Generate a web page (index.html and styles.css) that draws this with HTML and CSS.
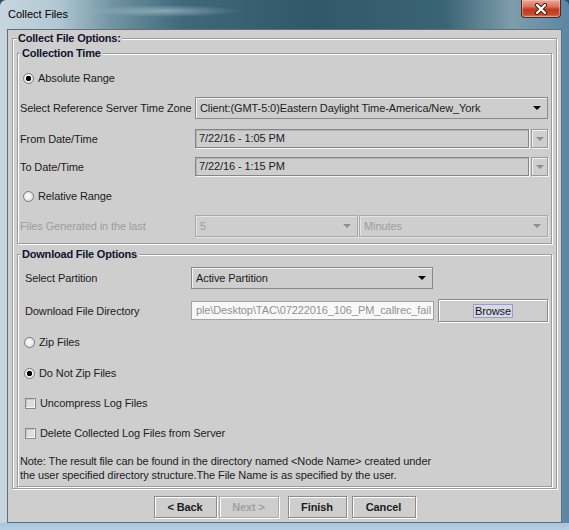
FILE: index.html
```html
<!doctype HTML>
<html>
	<head>
		<meta charset="utf-8"/>
		<title>Collect Files</title>
		<link rel="stylesheet" href="styles.css">
	</head>

	<body>
		<div class='window'>
			<div class='titlebar'>
				<span class='title'>Collect Files</span>
				<div class='close'>
					<svg width='14' height='12' viewBox='0 0 14 12'>
						<path d='M3 2 L11 10 M11 2 L3 10' stroke='#3b1a14' stroke-width='4.2' stroke-linecap='round'/>
						<path d='M3 2 L11 10 M11 2 L3 10' stroke='#fff' stroke-width='2.4' stroke-linecap='round'/>
					</svg>
				</div>
			</div>

			<div class='client'>
				<fieldset class='group outer'>
					<legend>Collect File Options:</legend>

					<fieldset class='group time'>
						<legend>Collection Time</legend>

						<div class='row opt abs-row'><span class='radio on'></span>Absolute Range</div>

						<div class='row tz-row'>
							<span class='lbl'>Select Reference Server Time Zone</span>
							<div class='combo tz'><span class='val'>Client:(GMT-5:0)Eastern Daylight Time-America/New_York</span><span class='arrow'></span></div>
						</div>

						<div class='row date-row from-row'>
							<span class='lbl'>From Date/Time</span>
							<div class='datefield'>7/22/16 - 1:05 PM</div>
							<div class='spin'><span class='arrow grey'></span></div>
						</div>

						<div class='row date-row to-row'>
							<span class='lbl'>To Date/Time</span>
							<div class='datefield'>7/22/16 - 1:15 PM</div>
							<div class='spin'><span class='arrow grey'></span></div>
						</div>

						<div class='row opt rel-row'><span class='radio'></span>Relative Range</div>

						<div class='row last-row'>
							<span class='lbl off'>Files Generated in the last</span>
							<div class='combo off count'><span class='val'>5</span><span class='arrow grey'></span></div>
							<div class='combo off unit'><span class='val'>Minutes</span><span class='arrow grey'></span></div>
						</div>
					</fieldset>

					<fieldset class='group download'>
						<legend>Download File Options</legend>

						<div class='row part-row'>
							<span class='lbl'>Select Partition</span>
							<div class='combo partition'><span class='val'>Active Partition</span><span class='arrow'></span></div>
						</div>

						<div class='row dir-row'>
							<span class='lbl'>Download File Directory</span>
							<div class='dirfield'>ple\Desktop\TAC\07222016_106_PM_callrec_fail</div>
							<div class='browse'><span class='focus'>Browse</span></div>
						</div>

						<div class='row opt dl zip-row'><span class='radio'></span>Zip Files</div>
						<div class='row opt dl nozip-row'><span class='radio on'></span>Do Not Zip Files</div>
						<div class='row opt dl unc-row'><span class='check'></span>Uncompress Log Files</div>
						<div class='row opt dl del-row'><span class='check'></span>Delete Collected Log Files from Server</div>

						<p class='note'>Note: The result file can be found in the directory named &lt;Node Name&gt; created under<br>the user specified directory structure.The File Name is as specified by the user.</p>
					</fieldset>
				</fieldset>

				<div class='buttons'>
					<div class='btn back'>&lt; Back</div>
					<div class='btn next off'>Next &gt;</div>
					<div class='btn finish'>Finish</div>
					<div class='btn cancel'>Cancel</div>
				</div>
			</div>
		</div>
	</body>
</html>
```

FILE: styles.css
```css
html, body {
	margin: 0;
	padding: 0;
	width: 569px;
	height: 530px;
	overflow: hidden;
	background-color: #2f4d5d;
}
body * {
	box-sizing: border-box;
	font-family: "Liberation Sans", Arial, sans-serif;
}

/* window frame + glass title */
.window {
	width: 569px;
	height: 530px;
	padding: 0 7px 7px 7px;
	display: flex;
	flex-direction: column;
	border-radius: 6px 6px 0 0;
	background:
		linear-gradient(#a8c3da, #b7cfe3) left bottom / 100% 7px no-repeat,
		radial-gradient(ellipse 75px 6px at 165px 11px, rgba(190, 212, 222, 0.55), rgba(190, 212, 222, 0) 100%),
		linear-gradient(to right, #c6d6df 0%, #b3c8d4 10%, #6f93a3 20%, #3f6879 32%, #315868 55%, #3a6373 78%, #7d9dab 90%, #5d86a4 100%);
}

.titlebar {
	height: 29px;
	flex-shrink: 0;
	display: flex;
	justify-content: space-between;
	align-items: flex-start;
}
.title {
	padding: 8px 0 0 1px;
	font-size: 11px;
	line-height: 13px;
	color: #000;
}
.close {
	width: 40px;
	height: 18px;
	margin-right: 1px;
	display: flex;
	align-items: center;
	justify-content: center;
	border: 1px solid #54261d;
	border-top: none;
	border-radius: 0 0 4px 4px;
	background: linear-gradient(#e9a999 0%, #d9705a 40%, #c0391f 55%, #c84a2f 85%, #de7c5e 100%);
	box-shadow: inset 0 0 0 1px rgba(255, 210, 195, 0.45);
}

/* dialog body */
.client {
	flex: 1;
	display: flex;
	flex-direction: column;
	padding: 0 4px;
	background-color: #cecece;
	border: 1px solid #5e6f7d;
	font-size: 11px;
	letter-spacing: -0.1px;
	color: #1c1c1c;
}

fieldset.group {
	margin: 0;
	min-width: 0;
	border: 1px solid #9c9c9c;
	box-shadow: 1px 1px 0 #fff, inset 1px 1px 0 #fff;
}
fieldset.group > legend {
	font-weight: bold;
	font-size: 11px;
	line-height: 13px;
	letter-spacing: -0.2px;
	color: #10142c;
	background-color: #cecece;
}

.outer {
	margin-top: 2px !important;
	padding: 0 4px 1px 4px;
}
.outer > legend {
	padding: 0 1px;
}

.time, .download {
	padding: 0 3px 0 2px;
}
.time > legend, .download > legend {
	padding: 0 2px;
}
.time {
	margin-top: 2px !important;
	padding-bottom: 6px;
}
.download {
	margin-top: 4px !important;
	padding-bottom: 4px;
}

.row {
	display: flex;
	align-items: center;
	white-space: nowrap;
}
.opt {
	height: 24px;
	padding-left: 3px;
}
.opt.dl {
	padding-left: 4px;
}

.abs-row { margin-top: 6px; }
.tz-row { margin-top: 7px; height: 22px; }
.date-row { height: 19px; }
.from-row { margin-top: 10px; }
.to-row { margin-top: 9px; }
.rel-row { margin-top: 8px; }
.last-row { margin-top: 7px; height: 22px; }

.part-row { margin-top: 6px; height: 22px; padding-left: 5px; }
.dir-row { margin-top: 10px; height: 23px; padding-left: 5px; }
.zip-row { margin-top: 8px; }
.nozip-row { margin-top: 7px; }
.unc-row { margin-top: 6px; }
.del-row { margin-top: 6px; }

.lbl {
	flex-shrink: 0;
}
.time .lbl { width: 175px; }
.download .lbl { width: 166px; }
.off { color: #9d9d9d; }

/* combo boxes */
.combo {
	display: flex;
	align-items: center;
	height: 22px;
	padding-left: 4px;
	border: 1px solid #8a8a8a;
	box-shadow: inset 1px 1px 0 #f2f2f2;
}
.combo .val {
	flex: 1;
	overflow: hidden;
}
.combo.tz { width: 353px; }
.combo.partition { width: 242px; }
.combo.count { width: 163px; margin-right: 1px; }
.combo.unit { width: 189px; }
.combo.off {
	border-color: #a9a9a9;
	box-shadow: inset 1px 1px 0 #e4e4e4, 1px 1px 0 #e4e4e4;
}

.arrow {
	width: 0;
	height: 0;
	margin-right: 6px;
	border-left: 4px solid transparent;
	border-right: 4px solid transparent;
	border-top: 4px solid #000;
}
.arrow.grey {
	border-top-color: #8e8e8e;
}

/* date spinners */
.datefield {
	width: 334px;
	height: 19px;
	line-height: 17px;
	padding-left: 3px;
	border: 1px solid #858585;
	box-shadow: 1px 1px 0 #f6f6f6, inset 1px 1px 0 #b4b4b4;
}
.spin {
	width: 17px;
	height: 19px;
	margin-left: 2px;
	display: flex;
	align-items: center;
	justify-content: center;
	border: 1px solid #9a9a9a;
	box-shadow: inset 1px 1px 0 #f2f2f2, 1px 1px 0 #f2f2f2;
}
.spin .arrow {
	margin: 0;
}

/* directory field + browse */
.dirfield {
	width: 243px;
	height: 19px;
	line-height: 17px;
	padding-right: 2px;
	text-align: right;
	overflow: hidden;
	border: 1px solid #a3a3a3;
	background-color: #f8f8f8;
	color: #929292;
}
.browse {
	width: 110px;
	height: 23px;
	margin-left: 4px;
	display: flex;
	align-items: center;
	justify-content: center;
	border: 1px solid #8c8c8c;
	box-shadow: inset 1px 1px 0 #fff, 1px 1px 0 #fff;
}
.browse .focus {
	height: 14px;
	line-height: 12px;
	padding: 0 1px;
	border: 1px solid #9c9cc8;
	background-color: #d8d8e6;
	color: #141414;
}

/* radio + check */
.radio {
	width: 11px;
	height: 11px;
	margin-right: 4px;
	flex-shrink: 0;
	border-radius: 50%;
	border: 1px solid #7b7b7b;
	background: radial-gradient(circle at 45% 45%, #ffffff 0, #e6e6e6 60%, #cfcfcf 100%);
}
.radio.on {
	background: radial-gradient(circle, #000 0, #000 2.4px, #f0f0f0 3px, #dcdcdc 100%);
}
.check {
	width: 11px;
	height: 11px;
	margin: 0 4px 0 1px;
	flex-shrink: 0;
	border: 1px solid #888;
	background-color: #dedede;
	box-shadow: inset -1px -1px 0 #f6f6f6, inset 1px 1px 0 #c4c4c4;
}

.note {
	margin: 9px 0 0 0;
	line-height: 14px;
	white-space: nowrap;
}

/* wizard buttons */
.buttons {
	margin-top: 7px;
	display: flex;
	justify-content: center;
}
.btn {
	height: 22px;
	display: flex;
	align-items: center;
	justify-content: center;
	font-weight: bold;
	border: 1px solid #8c8c8c;
	box-shadow: inset 1px 1px 0 #fff, 1px 1px 0 #fff;
}
.btn.back { width: 63px; }
.btn.next { width: 60px; margin-left: 2px; }
.btn.finish { width: 59px; margin-left: 9px; }
.btn.cancel { width: 64px; margin-left: 5px; }
.btn.off {
	color: #a2a2a2;
	border-color: #ababab;
}
```
